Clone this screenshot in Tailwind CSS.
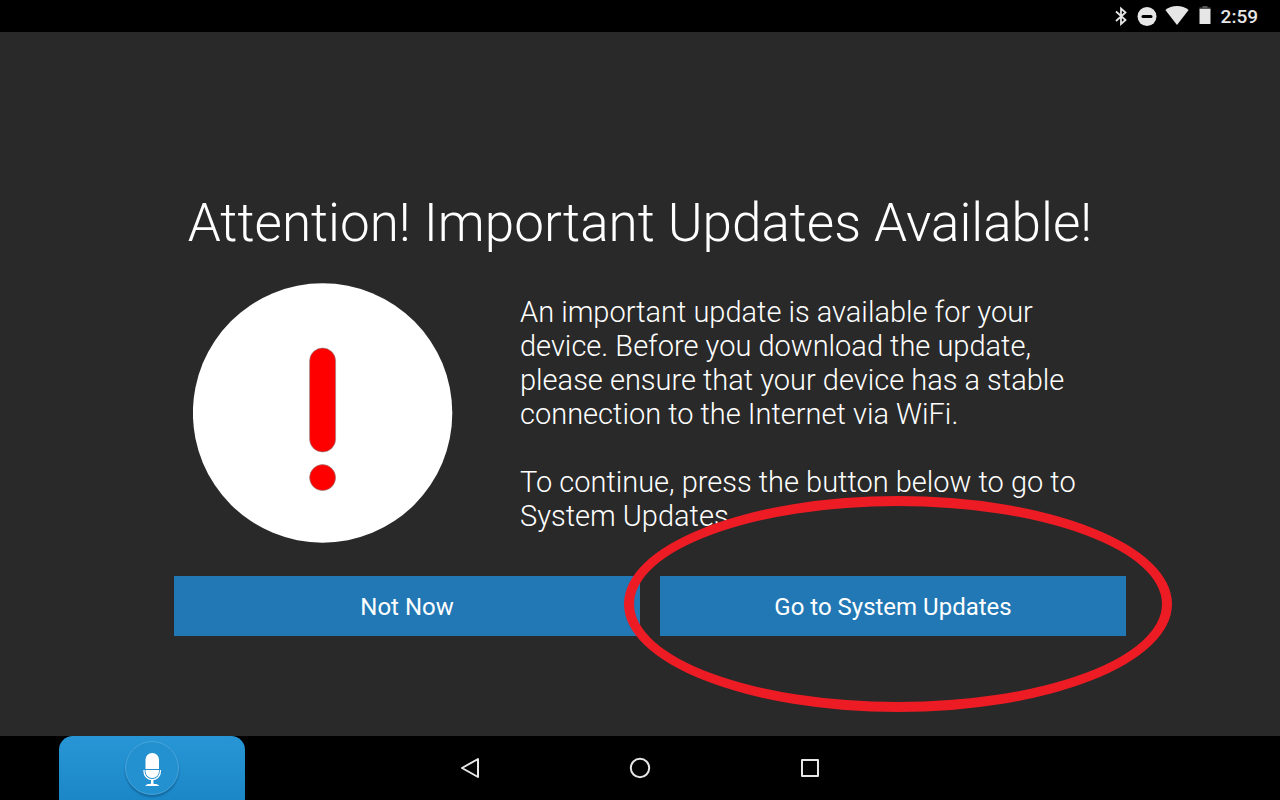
<!DOCTYPE html>
<html lang="en">
<head>
<meta charset="UTF-8">
<meta name="viewport" content="width=device-width, initial-scale=1.0">
<title>Important Updates Available</title>
<script src="https://cdn.jsdelivr.net/npm/@tailwindcss/browser@4"></script>
</head>
<body class="flex flex-col min-h-screen overflow-x-hidden bg-[#292929] text-white font-['Roboto',sans-serif]">
    <!-- status bar -->
    <header class="flex items-center justify-end h-8 pr-[22px] bg-black text-[#e6e6e6]">
        <svg class="w-3 h-5 mr-2.5" viewBox="0 0 12 20" fill="none" stroke="currentColor" stroke-width="1.800" aria-label="Bluetooth">
            <path d="M1 5.500l9.500 8.500L6 18V2.500l4.500 4L1 15"/>
        </svg>
        <svg class="w-5 h-5 mr-2" viewBox="0 0 20 20" aria-label="Do not disturb">
            <circle cx="10" cy="10.500" r="9.500" fill="currentColor"/>
            <path d="M6 10.500h8" stroke="#000" stroke-width="3" stroke-linecap="round"/>
        </svg>
        <svg class="w-6 h-5 mr-2.5" viewBox="0 0 24 20" fill="currentColor" aria-label="WiFi">
            <path d="M12 19L.4 4C3.500 1.400 7.500 0 12 0s8.500 1.400 11.600 4z"/>
        </svg>
        <svg class="w-3 h-5 mr-2.5" viewBox="0 0 12 20" fill="currentColor" aria-label="Battery">
            <path d="M3.500-.5h5V1.500H11.500v2H.5v-2h3z" fill="#555"/>
            <path d="M.5 3H11.500V18H.5z"/>
        </svg>
        <time class="pt-px text-[19px] leading-8 font-medium">2:59</time>
    </header>

    <main class="flex-1 flex flex-col justify-end pb-[100px]">
        <div class="w-full max-w-[972px] mx-auto">
            <h1 class="text-center text-[53px] leading-[72px] font-light">Attention! Important Updates Available!</h1>
            <div class="flex items-center mt-6 pl-[39px] pr-5">
                <svg class="shrink-0 w-[260px] h-[260px] mr-[67px]" viewBox="0 0 260 260" aria-hidden="true">
                    <circle cx="129.600" cy="130" r="129.700" fill="#fff"/>
                    <g fill="red" stroke="#888" stroke-width=".6">
                        <rect x="116.600" y="65" width="26" height="104" rx="13"/>
                        <circle cx="129.600" cy="194.600" r="13"/>
                    </g>
                </svg>
                <div class="flex flex-col gap-[34px] pt-0.5 text-[29px] leading-[34px] font-light">
                    <p>An important update is available for your device. Before you download the update, please ensure that your device has a stable connection to the Internet via WiFi.</p>
                    <p>To continue, press the button below to go to System Updates.</p>
                </div>
            </div>
            <div class="grid grid-cols-2 gap-5 mt-[33px] pl-5 text-2xl">
                <button type="button" class="h-[60px] pt-0.5 bg-[#2278b5]">Not Now</button>
                <div class="relative">
                    <button type="button" class="w-full h-[60px] pt-0.5 bg-[#2278b5]">Go to System Updates</button>
                    <!-- highlight ring -->
                    <div class="absolute -left-9 -right-[46px] -top-20 -bottom-[76px] border-10 border-[#ed1c24] rounded-[50%] pointer-events-none"></div>
                </div>
            </div>
        </div>
    </main>

    <!-- navigation bar -->
    <nav class="relative flex items-center justify-center gap-[146px] h-16 bg-black text-[#e6e6e6]">
        <button type="button" aria-label="Voice" class="absolute left-[59px] inset-y-0 w-[186px] flex items-center justify-center rounded-t-[14px] bg-linear-to-b from-[#2896d6] to-[#1b87c7]">
            <span class="flex items-center justify-center w-[54px] h-[54px] rounded-full border border-[#47a5dc] bg-[#2390d0] shadow-[0_2px_2px_#12669b]">
                <svg class="w-5 h-9" viewBox="0 0 20 36" fill="none" stroke="#fff">
                    <rect x="3.500" y="3" width="13.500" height="25" rx="6.500" fill="#fff" stroke="none"/>
                    <path d="M3 19.500h14" stroke="#2390d0"/>
                    <path d="M2 20v1.500a8.200 8.200 0 0 0 16.400 0V20" stroke-width="1.300"/>
                    <path d="M10.200 30v5" stroke-width="2.500"/>
                    <path d="M3.500 36c0-1.500 3-2.300 6.700-2.300S17 34.500 17 36z" fill="#fff" stroke="none"/>
                </svg>
            </span>
        </button>
        <button type="button" aria-label="Back">
            <svg class="w-6 h-6" viewBox="0 0 24 24" fill="none" stroke="currentColor" stroke-width="2" stroke-linejoin="round">
                <path d="M20 3v18L4 12z"/>
            </svg>
        </button>
        <button type="button" aria-label="Home">
            <svg class="w-6 h-6" viewBox="0 0 24 24" fill="none" stroke="currentColor" stroke-width="2">
                <circle cx="12" cy="12" r="9.200"/>
            </svg>
        </button>
        <button type="button" aria-label="Recent apps">
            <svg class="w-6 h-6" viewBox="0 0 24 24" fill="none" stroke="currentColor" stroke-width="2" stroke-linejoin="round">
                <path d="M4 4h16v16H4z"/>
            </svg>
        </button>
    </nav>
</body>
</html>
